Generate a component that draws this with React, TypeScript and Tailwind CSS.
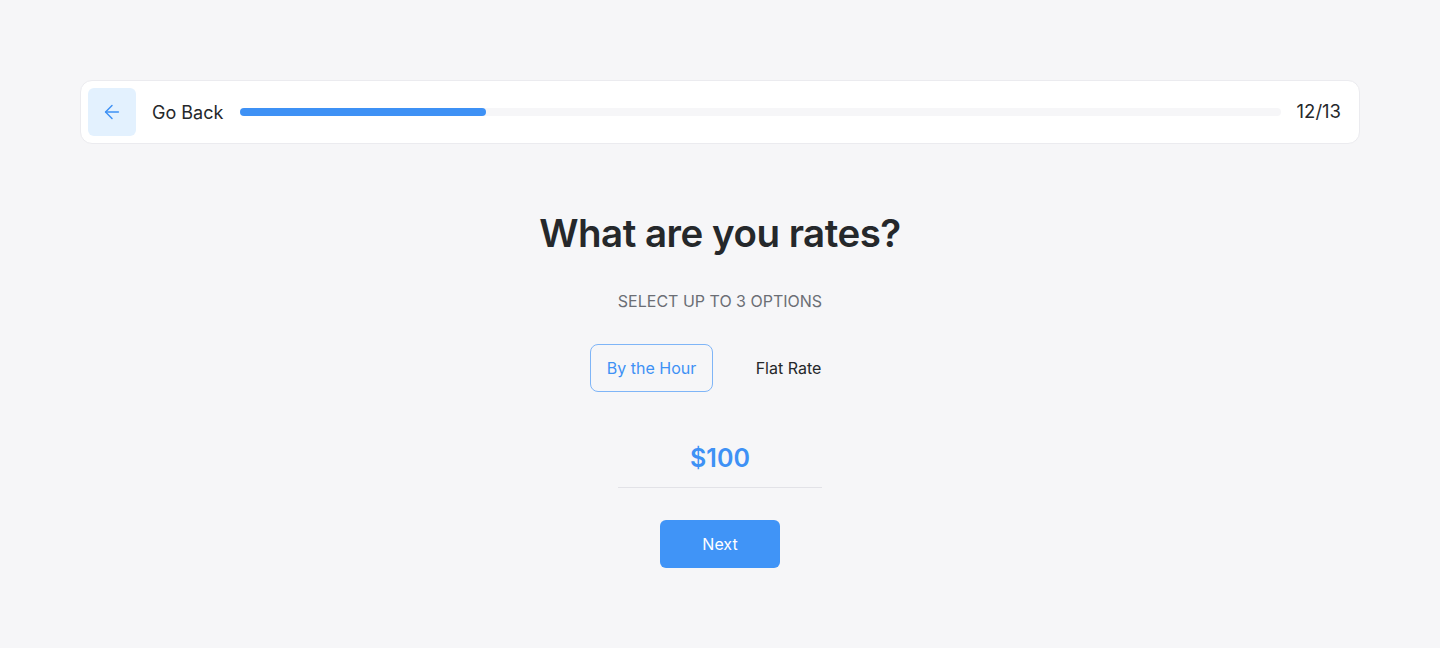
import React, { useState } from 'react';
import { ArrowLeft } from 'lucide-react';

const App: React.FC = () => {
  const [mode, setMode] = useState<'hour' | 'flat'>('hour');
  const step = 12;
  const total = 13;

  return (
    <div className="min-h-screen w-full bg-[#f6f6f8] font-['Inter',sans-serif] text-[#25282b]">
      <div className="px-20 pt-20">
        {/* top progress bar */}
        <div className="flex h-16 items-center rounded-xl border border-[#ebebef] bg-white pl-[7px] pr-[18px]">
          <button className="flex h-12 w-12 items-center justify-center rounded-md bg-[#e3f1fe] text-[#3e91f5]">
            <ArrowLeft size={22} strokeWidth={1.6} />
          </button>
          <span className="ml-4 text-[18px] text-[#25282b]">Go Back</span>
          <div className="ml-[17px] h-2 flex-1 rounded-full bg-[#f6f6f8]">
            <div className="h-2 w-[246px] rounded-full bg-[#3e91f5]" />
          </div>
          <span className="ml-4 text-[18.5px] text-[#25282b]">
            {step}/{total}
          </span>
        </div>
      </div>

      <div className="mt-[65px] flex flex-col items-center">
        <h1 className="text-[38.5px] leading-[48px] font-semibold tracking-[-0.5px] text-[#25282b]">
          What are you rates?
        </h1>
        <p className="mt-[34px] text-[16px] leading-5 text-[#6b6e75]">SELECT UP TO 3 OPTIONS</p>

        <div className="mt-[33px] flex gap-[14px]">
          <button
            onClick={() => setMode('hour')}
            className={
              mode === 'hour'
                ? 'h-12 w-[123px] rounded-lg border border-[#7fb5f7] text-[16px] text-[#3e91f5]'
                : 'h-12 w-[123px] rounded-lg border border-transparent text-[16px] text-[#25282b]'
            }
          >
            By the Hour
          </button>
          <button
            onClick={() => setMode('flat')}
            className={
              mode === 'flat'
                ? 'h-12 w-[123px] rounded-lg border border-[#7fb5f7] text-[16px] text-[#3e91f5]'
                : 'h-12 w-[123px] rounded-lg border border-transparent text-[16px] text-[#25282b]'
            }
          >
            Flat Rate
          </button>
        </div>

        <div className="mt-[50px] w-[204px] border-b border-[#e2e2e7] pb-[13px] text-center text-[25px] leading-8 font-semibold text-[#3e91f5]">
          $100
        </div>

        <button className="mt-8 h-12 w-[120px] rounded-md bg-[#4094f7] text-[16px] text-white">
          Next
        </button>
      </div>
    </div>
  );
};

export default App;
